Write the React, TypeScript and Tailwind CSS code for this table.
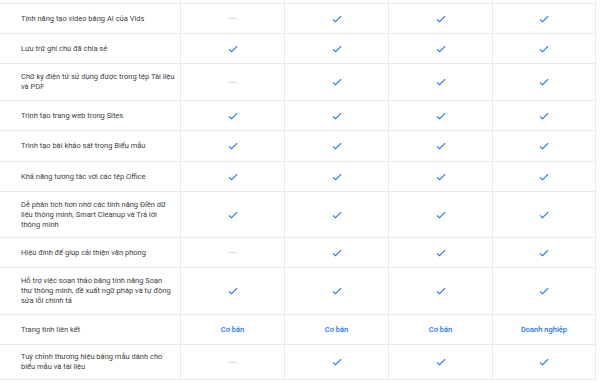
import React from "react";

type Cell = "check" | "dash" | string;

const rows: { label: React.ReactNode; h: string; cells: Cell[] }[] = [
  { label: "Tính năng tạo video bằng AI của Vids", h: "h-[30px]", cells: ["dash", "check", "check", "check"] },
  { label: "Lưu trữ ghi chú đã chia sẻ", h: "h-[30px]", cells: ["check", "check", "check", "check"] },
  {
    label: (
      <>
        Chữ ký điện tử sử dụng được trong tệp Tài liệu
        <br />
        và PDF
      </>
    ),
    h: "h-[37px]",
    cells: ["dash", "check", "check", "check"],
  },
  { label: "Trình tạo trang web trong Sites", h: "h-[30px]", cells: ["check", "check", "check", "check"] },
  { label: "Trình tạo bài khảo sát trong Biểu mẫu", h: "h-[31px]", cells: ["check", "check", "check", "check"] },
  { label: "Khả năng tương tác với các tệp Office", h: "h-[30px]", cells: ["check", "check", "check", "check"] },
  {
    label: (
      <>
        Dễ phân tích hơn nhờ các tính năng Điền dữ
        <br />
        liệu thông minh, Smart Cleanup và Trả lời
        <br />
        thông minh
      </>
    ),
    h: "h-[46px]",
    cells: ["check", "check", "check", "check"],
  },
  { label: "Hiệu đính để giúp cải thiện văn phong", h: "h-[30px]", cells: ["dash", "check", "check", "check"] },
  {
    label: (
      <>
        Hỗ trợ việc soạn thảo bằng tính năng Soạn
        <br />
        thư thông minh, đề xuất ngữ pháp và tự động
        <br />
        sửa lỗi chính tả
      </>
    ),
    h: "h-[47px]",
    cells: ["check", "check", "check", "check"],
  },
  { label: "Trang tính liên kết", h: "h-[30px]", cells: ["Cơ bản", "Cơ bản", "Cơ bản", "Doanh nghiệp"] },
  {
    label: (
      <>
        Tuỳ chỉnh thương hiệu bằng mẫu dành cho
        <br />
        biểu mẫu và tài liệu
      </>
    ),
    h: "h-[36px]",
    cells: ["dash", "check", "check", "check"],
  },
];

function Check() {
  return (
    <svg width="12" height="12" viewBox="0 0 24 24" aria-hidden>
      <path d="M9 16.17L4.83 12l-1.42 1.41L9 19 21 7l-1.41-1.41z" fill="#1a73e8" />
    </svg>
  );
}

function Dash() {
  return <div className="w-[9px] h-[1px] bg-[#dadce0]" />;
}

function CellContent({ c }: { c: Cell }) {
  if (c === "check") return <Check />;
  if (c === "dash") return <Dash />;
  return <span className="text-[#1a73e8] font-medium text-[7.5px]">{c}</span>;
}

export default function App() {
  return (
    <div
      className="w-[600px] h-[383px] bg-white overflow-hidden text-[#3c4043]"
      style={{ fontFamily: "Roboto, 'Noto Sans', sans-serif" }}
    >
      <div className="w-[596px] flex flex-col">
        <div className="h-[3px] flex">
          <div className="w-[180px]" />
          <div className="w-[104px] border-l border-[#e8eaed]" />
          <div className="w-[104px] border-l border-[#e8eaed]" />
          <div className="w-[104px] border-l border-[#e8eaed]" />
          <div className="w-[104px] border-l border-r border-[#e8eaed]" />
        </div>
        {rows.map((r, i) => (
          <div
            key={i}
            className={`flex ${r.h} border-t border-[#e8eaed] ${i === rows.length - 1 ? "border-b" : ""}`}
          >
            <div className="w-[180px] shrink-0 flex items-center pl-[21px] text-[7.5px] leading-[10px]">
              <div>{r.label}</div>
            </div>
            {r.cells.map((c, j) => (
              <div
                key={j}
                className={`w-[104px] shrink-0 flex items-center justify-center border-l border-[#e8eaed] ${
                  j === 3 ? "border-r" : ""
                }`}
              >
                <CellContent c={c} />
              </div>
            ))}
          </div>
        ))}
      </div>
    </div>
  );
}
